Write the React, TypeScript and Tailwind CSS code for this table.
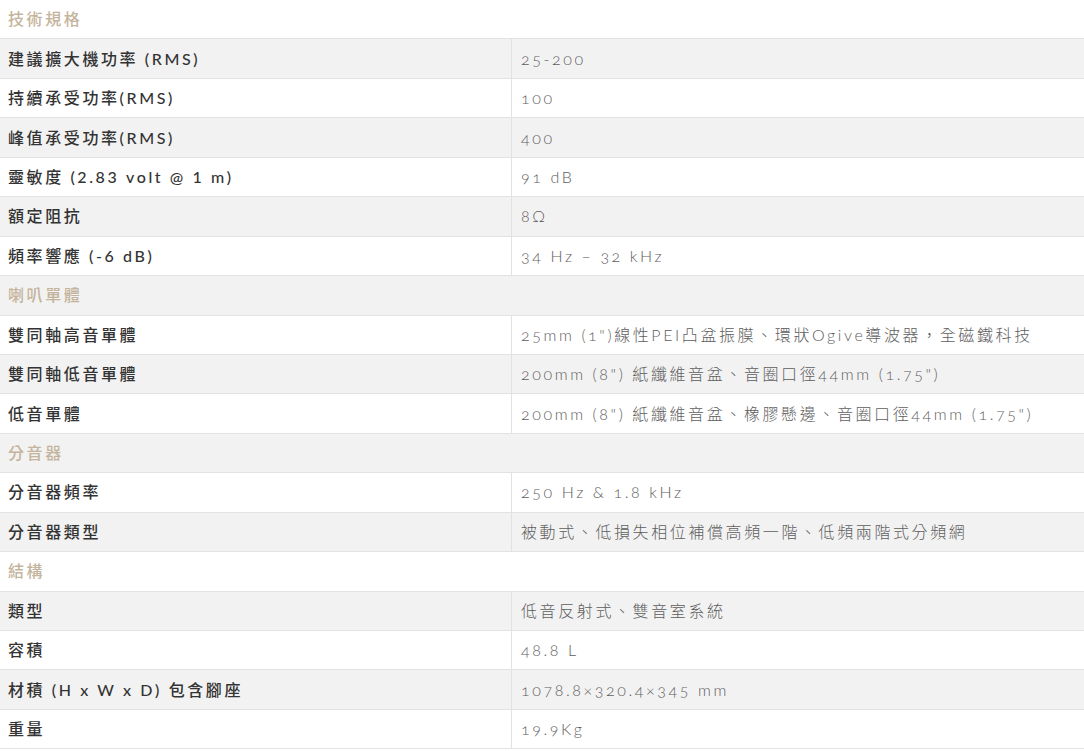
type Row = { label: string; value?: string; section?: boolean };

const rows: Row[] = [
  { label: '技術規格', section: true },
  { label: '建議擴大機功率 (RMS)', value: '25-200' },
  { label: '持續承受功率(RMS)', value: '100' },
  { label: '峰值承受功率(RMS)', value: '400' },
  { label: '靈敏度 (2.83 volt @ 1 m)', value: '91 dB' },
  { label: '額定阻抗', value: '8Ω' },
  { label: '頻率響應 (-6 dB)', value: '34 Hz – 32 kHz' },
  { label: '喇叭單體', section: true },
  { label: '雙同軸高音單體', value: '25mm (1")線性PEI凸盆振膜、環狀Ogive導波器，全磁鐵科技' },
  { label: '雙同軸低音單體', value: '200mm (8") 紙纖維音盆、音圈口徑44mm (1.75")' },
  { label: '低音單體', value: '200mm (8") 紙纖維音盆、橡膠懸邊、音圈口徑44mm (1.75")' },
  { label: '分音器', section: true },
  { label: '分音器頻率', value: '250 Hz & 1.8 kHz' },
  { label: '分音器類型', value: '被動式、低損失相位補償高頻一階、低頻兩階式分頻網' },
  { label: '結構', section: true },
  { label: '類型', value: '低音反射式、雙音室系統' },
  { label: '容積', value: '48.8 L' },
  { label: '材積 (H x W x D) 包含腳座', value: '1078.8×320.4×345 mm' },
  { label: '重量', value: '19.9Kg' },
];

export default function App() {
  return (
    <div className="w-[1084px] h-[751px] overflow-hidden bg-white font-['Lato','Noto_Sans_CJK_TC',sans-serif]">
      {rows.map((r, i) => {
        const bg = i % 2 === 1 ? 'bg-[#f2f2f2]' : 'bg-white';
        if (r.section) {
          return (
            <div key={i} className={`h-[39.45px] flex items-center px-2 border-b border-[#e2e2e2] ${bg}`}>
              <span className="text-[16px] font-medium tracking-[2.6px] text-[#c4b49c]">{r.label}</span>
            </div>
          );
        }
        return (
          <div key={i} className={`h-[39.45px] grid grid-cols-[512px_1fr] border-b border-[#e2e2e2] ${bg}`}>
            <div className="flex items-center px-2 border-r border-[#e2e2e2]">
              <span className="text-[16px] font-medium tracking-[2.6px] text-[#333333]">{r.label}</span>
            </div>
            <div className="flex items-center px-[9px]">
              <span className="text-[16px] font-light tracking-[2.6px] oldstyle-nums text-[#5e5e5e]">{r.value}</span>
            </div>
          </div>
        );
      })}
    </div>
  );
}
